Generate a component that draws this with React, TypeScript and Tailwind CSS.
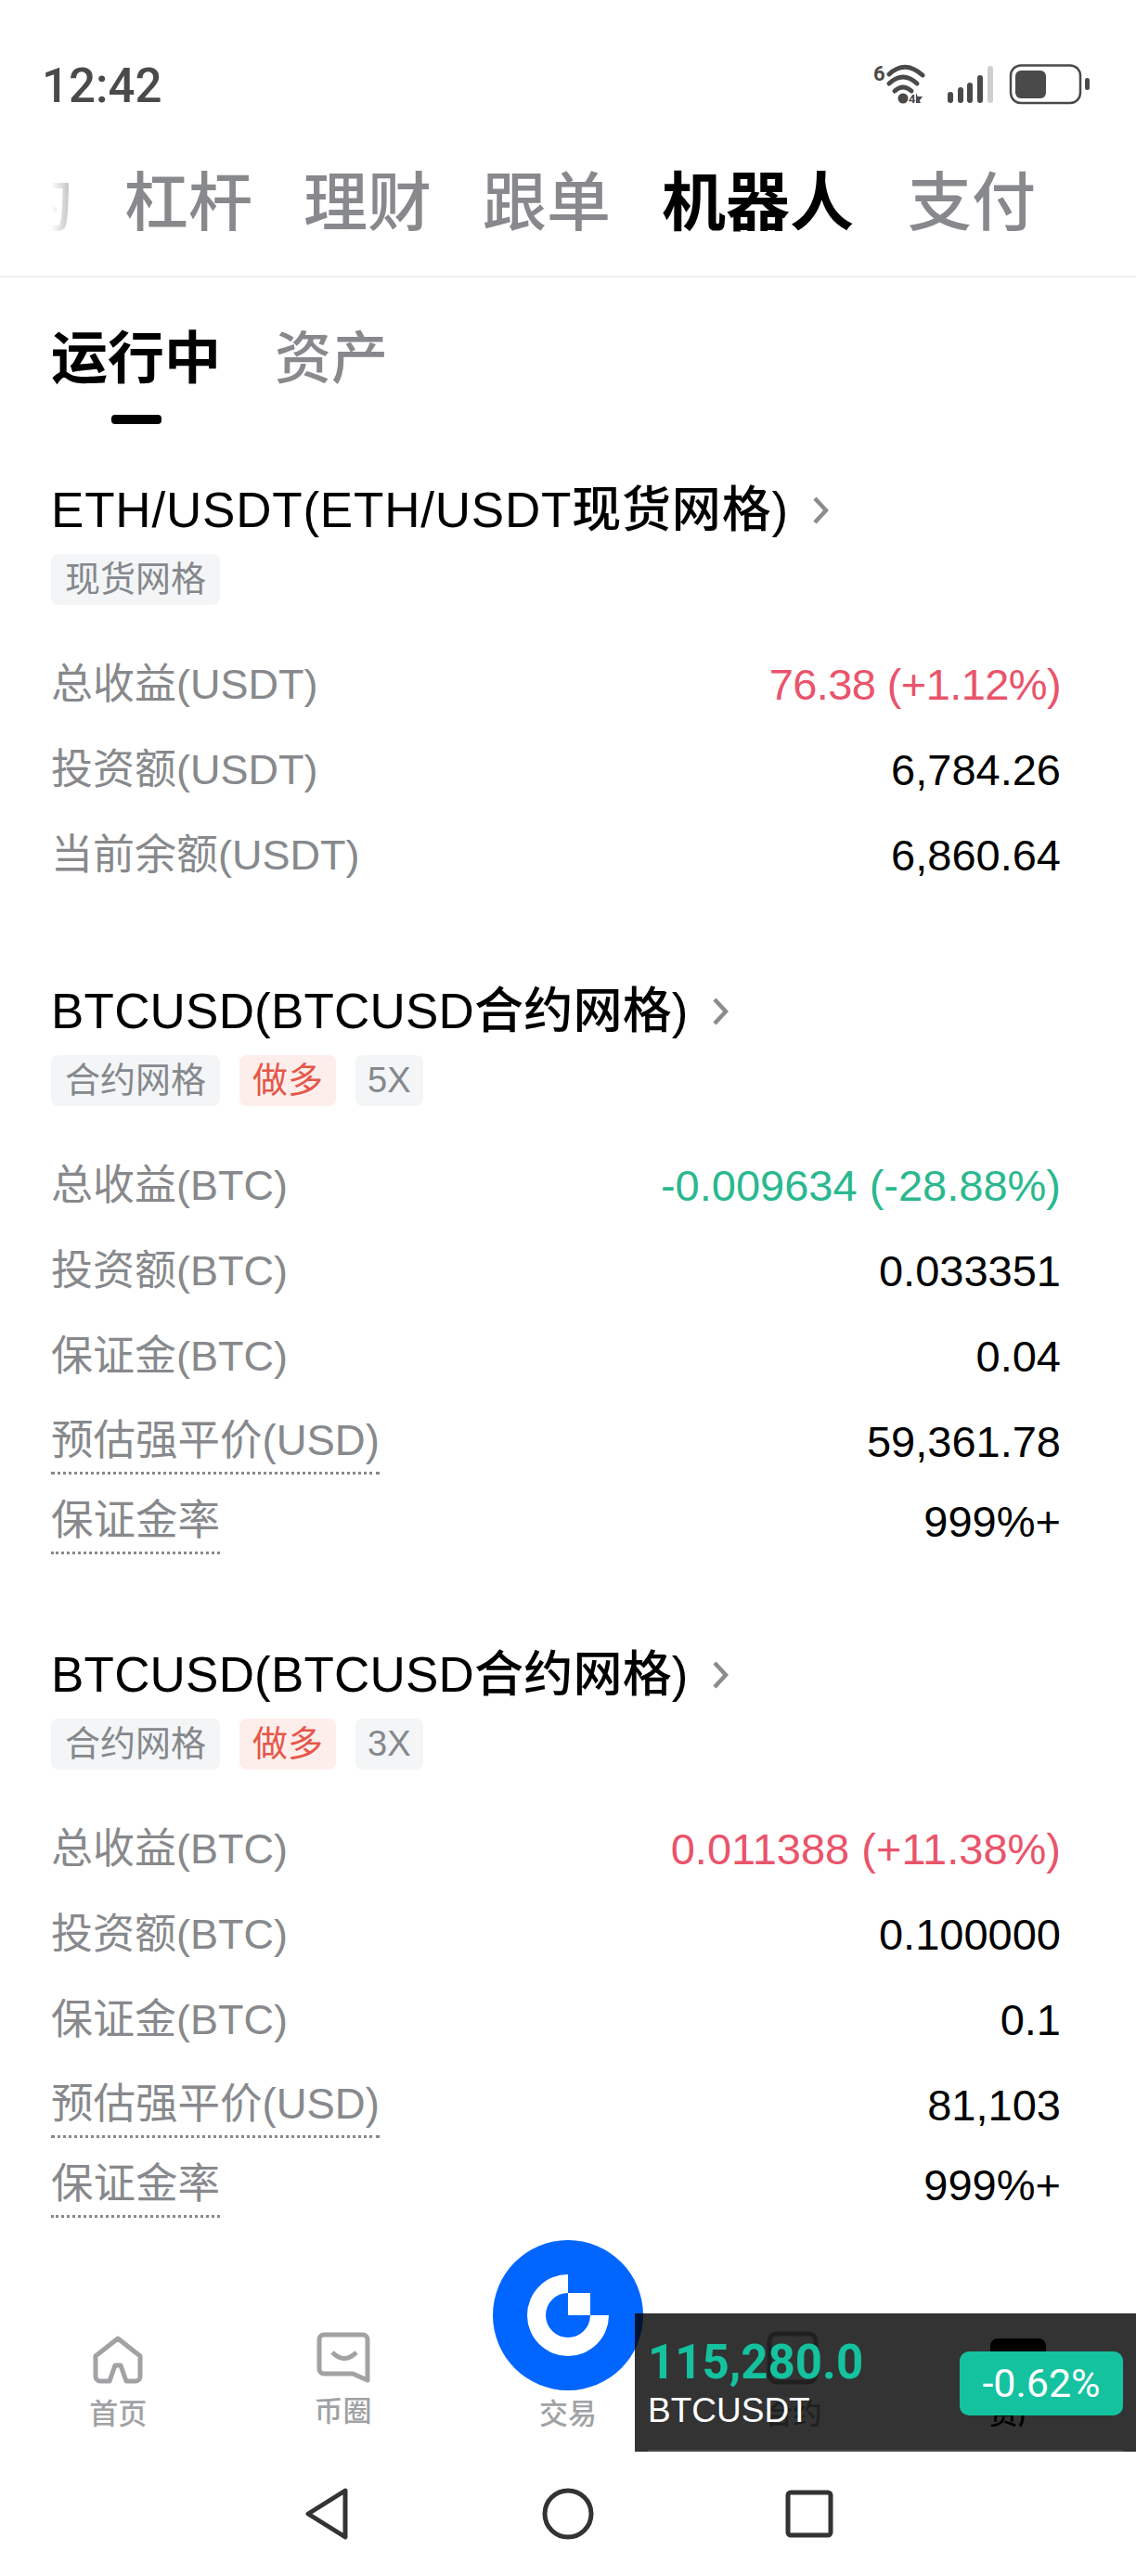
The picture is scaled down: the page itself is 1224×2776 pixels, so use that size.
const statusIcons = (
  <svg width="238" height="50" viewBox="0 0 238 50" fill="none">
    <text x="1" y="21" fontSize="22" fontWeight="700" fill="#4a4a4a" fontFamily="Roboto, sans-serif">6</text>
    <path d="M18 14 Q35 -2 54 15" stroke="#4a4a4a" strokeWidth="5" strokeLinecap="round" />
    <path d="M18 24 Q33 10 48 24" stroke="#4a4a4a" strokeWidth="5" strokeLinecap="round" />
    <path d="M24 32 Q33 24 42 32" stroke="#4a4a4a" strokeWidth="5" strokeLinecap="round" />
    <circle cx="33" cy="40" r="5.5" fill="#4a4a4a" />
    <text x="39" y="45" fontSize="13" fontWeight="700" fill="#4a4a4a" fontFamily="Roboto, sans-serif">4</text>
    <path d="M47 34 V45 H52 Z M49 45 L54 38 H49 Z" fill="#4a4a4a" />
    <rect x="81" y="33" width="6" height="12" rx="3" fill="#4a4a4a" />
    <rect x="92" y="28" width="6" height="17" rx="3" fill="#4a4a4a" />
    <rect x="102" y="23" width="6" height="22" rx="3" fill="#4a4a4a" />
    <rect x="113" y="15" width="6" height="30" rx="3" fill="#4a4a4a" />
    <rect x="124" y="5" width="6" height="40" rx="3" fill="#cfcfcf" />
    <rect x="149" y="4.5" width="75" height="40.5" rx="11" stroke="#4a4a4a" strokeWidth="2.5" />
    <rect x="154" y="10" width="33" height="30" rx="6" fill="#4a4a4a" />
    <rect x="229" y="18" width="5" height="13" rx="2.5" fill="#4a4a4a" />
  </svg>
);

const rows1 = [
  { label: '总收益(USDT)', value: '76.38 (+1.12%)', color: 'text-[#e9546b] tracking-[-0.6px]' },
  { label: '投资额(USDT)', value: '6,784.26' },
  { label: '当前余额(USDT)', value: '6,860.64' },
];

const rows2 = [
  { label: '总收益(BTC)', value: '-0.009634 (-28.88%)', color: 'text-[#2bb88f]' },
  { label: '投资额(BTC)', value: '0.033351' },
  { label: '保证金(BTC)', value: '0.04' },
  { label: '预估强平价(USD)', value: '59,361.78', dotted: true },
  { label: '保证金率', value: '999%+', dotted: true, short: true },
];

const rows3 = [
  { label: '总收益(BTC)', value: '0.011388 (+11.38%)', color: 'text-[#e9546b]' },
  { label: '投资额(BTC)', value: '0.100000' },
  { label: '保证金(BTC)', value: '0.1' },
  { label: '预估强平价(USD)', value: '81,103', dotted: true },
  { label: '保证金率', value: '999%+', dotted: true, short: true },
];

type Row = { label: string; value: string; color?: string; dotted?: boolean; short?: boolean };

function Tag({ text, red, tight }: { text: string; red?: boolean; tight?: boolean }) {
  if (red) {
    return (
      <span className="h-[55px] px-[14px] flex items-center rounded-lg bg-[#fdeeec] text-[#e5574a] text-[38px]">{text}</span>
    );
  }
  return (
    <span
      className={
        tight
          ? 'h-[55px] px-[13px] flex items-center rounded-lg bg-[#f3f5f6] text-[#85888c] text-[38px]'
          : 'h-[55px] px-[15px] flex items-center rounded-lg bg-[#f3f5f6] text-[#85888c] text-[38px]'
      }
    >
      {text}
    </span>
  );
}

function Bot({
  title,
  tags,
  rows,
  titleClass = 'tracking-[0.2px]',
  className,
}: {
  title: string;
  tags: { text: string; red?: boolean; tight?: boolean }[];
  rows: Row[];
  titleClass?: string;
  className?: string;
}) {
  return (
    <section className={`pl-[55px] pr-[81px] ${className ?? ''}`}>
      <div className="h-[60px] flex items-center gap-[25px] text-[53px] font-medium text-black">
        <span className={titleClass}>{title}</span>
        <svg width="18" height="30" viewBox="0 0 18 30" fill="none">
          <path d="M3 2 L15 15 L3 28" stroke="#8a8c8f" strokeWidth="4.5" />
        </svg>
      </div>
      <div className="mt-[17px] flex gap-[21px]">
        {tags.map((t) => (
          <Tag key={t.text} text={t.text} red={t.red} tight={t.tight} />
        ))}
      </div>
      <div className="mt-[40px]">
        {rows.map((r) => (
          <div key={r.label} className={r.short ? 'h-[80px] flex items-center justify-between' : 'h-[92px] flex items-center justify-between'}>
            <span
              className={
                r.dotted
                  ? 'mt-[5px] pb-[5px] text-[45.5px] leading-[56px] text-[#87898c] border-b-[3px] border-dotted border-[#87898c]'
                  : 'text-[45px] leading-[56px] text-[#87898c]'
              }
            >
              {r.label}
            </span>
            <span className={`text-[47px] leading-[56px] ${r.color ?? 'text-black'}`}>{r.value}</span>
          </div>
        ))}
      </div>
    </section>
  );
}

function NavItem({
  label,
  icon,
  dark,
  labelClass = 'mt-[15px]',
}: {
  label: string;
  icon: React.ReactNode;
  dark?: boolean;
  labelClass?: string;
}) {
  return (
    <div className={dark ? 'flex flex-col items-center text-black' : 'flex flex-col items-center text-[#a0a2a4]'}>
      <div className="h-[58px] flex items-end">{icon}</div>
      <span className={`${labelClass} text-[31px] leading-[34px] font-medium`}>{label}</span>
    </div>
  );
}

export default function App() {
  return (
    <div className="relative w-[1224px] h-[2776px] overflow-hidden bg-white flex flex-col [font-family:'Liberation_Sans','Noto_Sans_CJK_SC',sans-serif]">
      {/* status bar */}
      <div className="h-[160px] pt-[63px] pl-[45px] pr-[46px] flex items-start justify-between">
        <span className="text-[51px] leading-[60px] font-medium text-[#4a4a4a] [font-family:Roboto,sans-serif]">12:42</span>
        <div className="mt-[3px]">{statusIcons}</div>
      </div>

      {/* top tabs */}
      <div className="h-[139px] pl-[55px] pb-[18px] flex items-center gap-[55px] border-b-2 border-[#f2f2f2] text-[69px] font-medium text-[#88898c]">
        <div className="relative w-[24px] h-[80px] overflow-hidden flex justify-end items-center">
          <span className="shrink-0">约</span>
          <div className="absolute inset-0 bg-gradient-to-r from-white to-white/40" />
        </div>
        <span>杠杆</span>
        <span>理财</span>
        <span>跟单</span>
        <span className="font-bold text-black">机器人</span>
        <span className="ml-[3px]">支付</span>
      </div>

      {/* sub tabs */}
      <div className="pl-[55px] pt-[53px] flex gap-[58px] text-[61px] leading-[70px] font-medium text-[#88898c]">
        <div className="flex flex-col items-center">
          <span className="font-bold text-black">运行中</span>
          <div className="mt-[25px] w-[54px] h-[10px] rounded-[4px] bg-black" />
        </div>
        <span>资产</span>
      </div>

      <div className="mt-[63px]">
        <Bot
          title="ETH/USDT(ETH/USDT现货网格)"
          titleClass="tracking-[0.8px]"
          tags={[{ text: '现货网格' }]}
          rows={rows1}
          className="mb-[92px]"
        />
        <Bot
          title="BTCUSD(BTCUSD合约网格)"
          tags={[{ text: '合约网格' }, { text: '做多', red: true }, { text: '5X', tight: true }]}
          rows={rows2}
          className="mb-[95px]"
        />
        <Bot
          title="BTCUSD(BTCUSD合约网格)"
          tags={[{ text: '合约网格' }, { text: '做多', red: true }, { text: '3X', tight: true }]}
          rows={rows3}
        />
      </div>

      {/* bottom nav */}
      <div className="absolute left-0 right-0 top-[2512px] px-[6px] grid grid-cols-5">
        <NavItem
          label="首页"
          icon={
            <svg width="56" height="54" viewBox="0 0 56 54" fill="none">
              <path
                d="M4 23 L28 4 L52 23 V45 a5 5 0 0 1 -5 5 H37 L31 33 h-6 L19 50 H9 a5 5 0 0 1 -5 -5 Z"
                stroke="currentColor"
                strokeWidth="5"
                strokeLinejoin="round"
              />
            </svg>
          }
        />
        <NavItem
          label="币圈"
          labelClass="mt-[12px]"
          icon={
            <svg width="60" height="58" viewBox="0 0 60 58" fill="none">
              <path
                d="M9 4 H51 a5 5 0 0 1 5 5 V53 L40 46 H9 a5 5 0 0 1 -5 -5 V9 a5 5 0 0 1 5 -5 Z"
                stroke="currentColor"
                strokeWidth="5"
                strokeLinejoin="round"
              />
              <path d="M18 23 Q31 36 44 23" stroke="currentColor" strokeWidth="5" />
            </svg>
          }
        />
        <NavItem label="交易" icon={<div className="w-[56px]" />} />
        <NavItem
          label="合约"
          icon={
            <svg width="56" height="58" viewBox="0 0 56 58" fill="none">
              <rect x="3" y="3" width="50" height="52" rx="8" stroke="currentColor" strokeWidth="5" />
            </svg>
          }
        />
        <NavItem
          dark
          label="资产"
          icon={
            <svg width="60" height="50" viewBox="0 0 60 50" fill="currentColor">
              <rect x="0" y="0" width="60" height="50" rx="8" />
            </svg>
          }
        />
      </div>

      {/* trade button */}
      <div className="absolute left-[531px] top-[2414px] w-[162px] h-[162px] rounded-full bg-[#0066ff]">
        <svg width="162" height="162" viewBox="0 0 162 162" fill="#fff">
          <path d="M81 37 A44 44 0 1 0 125 81 L105 81 A24 24 0 1 1 81 57 Z" />
          <rect x="81" y="57" width="24" height="24" />
        </svg>
      </div>

      {/* floating ticker */}
      <div className="absolute left-[684px] top-[2493px] w-[540px] h-[149px] bg-black/80 px-[14px] flex justify-between [font-family:Roboto,sans-serif]">
        <div className="pt-[24px]">
          <div className="text-[51px] leading-[58px] font-bold text-[#14c29f]">115,280.0</div>
          <div className="mt-[1px] text-[37px] leading-[44px] text-white [font-family:'Liberation_Sans',sans-serif]">BTCUSDT</div>
        </div>
        <div className="mt-[41px] w-[176px] h-[69px] rounded-[10px] bg-[#14c29f] flex items-center justify-center text-[43px] text-white">
          -0.62%
        </div>
        <div className="absolute left-[14px] right-[14px] bottom-0 h-[2px] bg-[#4a4a4a]" />
      </div>

      {/* android nav */}
      <div className="absolute left-0 right-0 bottom-[38px] flex justify-center items-center gap-[204px]">
        <svg width="56" height="58" viewBox="0 0 56 58" fill="none">
          <path d="M48 4 L8 29 L48 54 Z" stroke="#333" strokeWidth="5" strokeLinejoin="round" />
        </svg>
        <svg width="56" height="56" viewBox="0 0 56 56" fill="none">
          <circle cx="28" cy="28" r="25" stroke="#333" strokeWidth="5" />
        </svg>
        <svg width="56" height="56" viewBox="0 0 56 56" fill="none">
          <rect x="5" y="5" width="46" height="46" rx="3" stroke="#333" strokeWidth="5" />
        </svg>
      </div>
    </div>
  );
}
